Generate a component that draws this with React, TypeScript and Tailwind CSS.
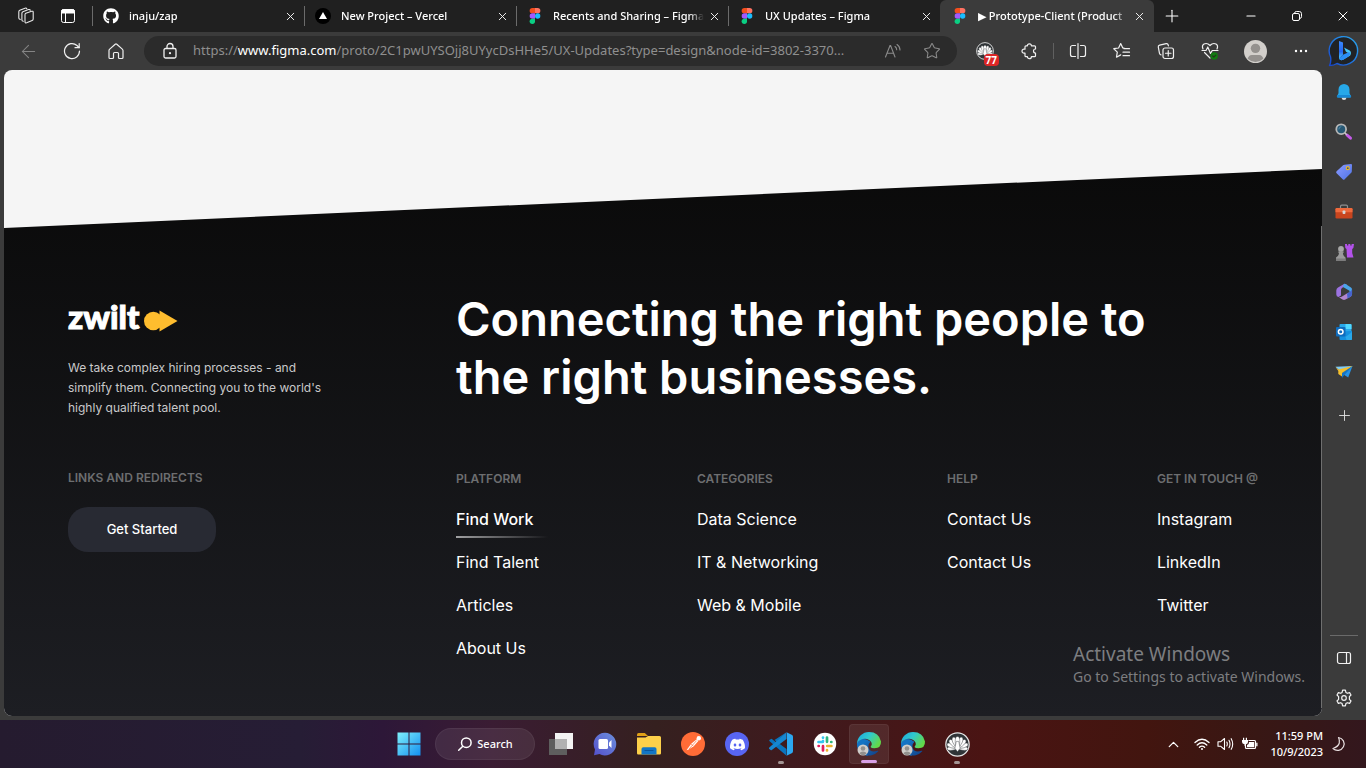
import React from "react";
import {
  ArrowLeft,
  Minus,
  Plus,
  Star,
  X,
  ChevronUp,
} from "lucide-react";
import { SiDiscord } from "react-icons/si";
import { FaGithub } from "react-icons/fa";

function FigmaLogo() {
  return (
    <svg width="12" height="16" viewBox="0 0 10 15" aria-hidden="true">
      <path d="M2.5 0H5v5H2.5a2.5 2.5 0 0 1 0-5z" fill="#f24e1e" />
      <path d="M5 0h2.5a2.5 2.5 0 0 1 0 5H5z" fill="#ff7262" />
      <path d="M2.5 5H5v5H2.5a2.5 2.5 0 0 1 0-5z" fill="#a259ff" />
      <circle cx="7.5" cy="7.5" r="2.5" fill="#1abcfe" />
      <path d="M2.5 10H5v2.5A2.5 2.5 0 1 1 2.5 10z" fill="#0acf83" />
    </svg>
  );
}

function VercelLogo() {
  return (
    <svg width="16" height="16" viewBox="0 0 16 16" aria-hidden="true">
      <circle cx="8" cy="8" r="8" fill="#000" />
      <path d="M8 4l4 7H4z" fill="#fff" />
    </svg>
  );
}

function WorkspacesIcon() {
  return (
    <svg width="18" height="18" viewBox="0 0 18 18" fill="none" stroke="#e8e8e8" strokeWidth="1.1" strokeLinejoin="round" strokeLinecap="round" aria-hidden="true">
      <path d="M8.800 6.300l5.800-2q1.600-.5 1.600 1v6.800q0 1.100-1 1.500l-5.600 2.200q-1.600.5-1.600-1V7.700q0-1 .8-1.400z" />
      <path d="M6.300 14.300q-1.400-.1-1.400-1.300V6.300q0-1.100 1-1.500l5.600-2.200q1.400-.5 1.800.6" />
      <path d="M3.200 12.400q-1.400-.1-1.400-1.300V4.700q0-1.100 1-1.500l5.200-2q1.400-.5 1.800.6" />
    </svg>
  );
}

function TabActionsIcon() {
  return (
    <svg width="16" height="16" viewBox="0 0 16 16" fill="none" aria-hidden="true">
      <rect x="1.500" y="1.500" width="13" height="13" rx="2" stroke="#fff" />
      <path d="M1.500 5V3.500a2 2 0 0 1 2-2h9a2 2 0 0 1 2 2V5z" fill="#fff" stroke="#fff" />
      <path d="M5.500 5v9" stroke="#fff" />
    </svg>
  );
}

function RefreshIcon() {
  return (
    <svg width="18" height="18" viewBox="0 0 18 18" fill="none" stroke="#f0f0f0" strokeWidth="1.200" strokeLinecap="round" aria-hidden="true">
      <path d="M16.500 9A7.500 7.500 0 1 1 14 3.500L16 5.500" />
      <path d="M16.200 1.500v4.200H12" />
    </svg>
  );
}

function HomeIcon() {
  return (
    <svg width="18" height="18" viewBox="0 0 18 18" fill="none" stroke="#f0f0f0" strokeWidth="1.200" strokeLinejoin="round" strokeLinecap="round" aria-hidden="true">
      <path d="M8.200 2.200L2.700 7.100q-.7.600-.7 1.500v6.900q0 1 1 1h2.500q1 0 1-1v-4q0-1 1-1h3q1 0 1 1v4q0 1 1 1H15q1 0 1-1V8.600q0-.9-.7-1.500L9.800 2.200q-.8-.7-1.600 0z" />
    </svg>
  );
}

function LockIcon() {
  return (
    <svg width="16" height="18" viewBox="0 0 16 18" className="shrink-0" fill="none" stroke="#f0f0f0" strokeWidth="1.300" aria-hidden="true">
      <rect x="2" y="6.500" width="12" height="9.500" rx="1.500" />
      <path d="M5 6.500V4.500a3 3 0 0 1 6 0v2" />
      <circle cx="8" cy="11.200" r="1.100" fill="#f0f0f0" stroke="none" />
    </svg>
  );
}

function ReadAloudIcon() {
  return (
    <svg width="18" height="16" viewBox="0 0 18 16" fill="none" stroke="#8b8b8b" strokeWidth="1.100" strokeLinecap="round" aria-hidden="true">
      <path d="M1.500 14L6 2.500h.6L11 14M3 10.200h6.500" />
      <path d="M11 3.500q1.700 1.200 1.700 3.300M13 1.500q3 2 3 5.500" />
    </svg>
  );
}

function PeacockIcon({ size }: { size: number }) {
  return (
    <svg width={size} height={size} viewBox="0 0 24 24" aria-hidden="true">
      <circle cx="12" cy="12" r="11.200" fill="#2f3437" stroke="#e5e5e5" strokeWidth="1.200" />
      <g fill="#fff" stroke="#2f3437" strokeWidth=".4">
        <ellipse cx="12" cy="9.500" rx="2" ry="4.500" transform="rotate(-96 12 15)" />
        <ellipse cx="12" cy="9.500" rx="2" ry="4.500" transform="rotate(96 12 15)" />
        <ellipse cx="12" cy="9" rx="2.100" ry="4.700" transform="rotate(-72 12 15)" />
        <ellipse cx="12" cy="9" rx="2.100" ry="4.700" transform="rotate(72 12 15)" />
        <ellipse cx="12" cy="9" rx="2.200" ry="4.800" transform="rotate(-47 12 15)" />
        <ellipse cx="12" cy="9" rx="2.200" ry="4.800" transform="rotate(47 12 15)" />
        <ellipse cx="12" cy="9" rx="2.200" ry="4.800" transform="rotate(-23 12 15)" />
        <ellipse cx="12" cy="9" rx="2.200" ry="4.800" transform="rotate(23 12 15)" />
        <ellipse cx="12" cy="9" rx="2.200" ry="4.800" />
        <path d="M10.800 9h2.400l1.300 6.500-2.500 3.500-2.500-3.500z" />
      </g>
    </svg>
  );
}

function PuzzleIcon() {
  return (
    <svg width="18" height="18" viewBox="0 0 18 18" fill="none" stroke="#f0f0f0" strokeWidth="1.200" strokeLinejoin="round" aria-hidden="true">
      <path d="M6 3.800h1.400a2 2 0 0 1 4 0H14.500q1 0 1 1V7a2 2 0 0 0 0 4v2.700q0 1-1 1h-3.100a2 2 0 0 1-4 0H6q-1 0-1-1V11.200h-1a2 2 0 0 1 0-4h1V4.800q0-1 1-1z" />
    </svg>
  );
}

function SplitIcon() {
  return (
    <svg width="18" height="18" viewBox="0 0 18 18" fill="none" stroke="#f0f0f0" strokeWidth="1.200" strokeLinecap="round" aria-hidden="true">
      <path d="M6.500 3.500h-3a2 2 0 0 0-2 2v7a2 2 0 0 0 2 2h3M11.500 3.500h3a2 2 0 0 1 2 2v7a2 2 0 0 1-2 2h-3M9 1.500v15" />
    </svg>
  );
}

function FavoritesIcon() {
  return (
    <svg width="18" height="18" viewBox="0 0 18 18" fill="none" stroke="#f0f0f0" strokeWidth="1.200" strokeLinecap="round" strokeLinejoin="round" aria-hidden="true">
      <path d="M11 6.200L9.800 6 7.700 1.600 5.600 6l-4.800.7 3.500 3.400-.8 5.100 4.200-2.300" />
      <path d="M11 6.700h5.500M10 10.200h6.500M10 13.700h6.500" />
    </svg>
  );
}

function CollectionsIcon() {
  return (
    <svg width="18" height="18" viewBox="0 0 18 18" fill="none" stroke="#f0f0f0" strokeWidth="1.200" strokeLinecap="round" strokeLinejoin="round" aria-hidden="true">
      <rect x="6" y="6" width="10.500" height="10.500" rx="2" />
      <path d="M11.250 8.500v5.500M8.500 11.250H14M4 12.800q-1.200-.2-1.500-1.500L1.300 5.200q-.3-1.600 1.300-2l6.600-1.500q1.600-.3 2 1.300l.2.800" />
    </svg>
  );
}

function EssentialsIcon() {
  return (
    <svg width="20" height="20" viewBox="0 0 20 20" fill="none" stroke="#f0f0f0" strokeWidth="1.200" strokeLinecap="round" strokeLinejoin="round" aria-hidden="true">
      <path d="M3 8Q1.500 4.500 4 3q3.200-1.500 6 1.500 2.800-3 6-1.500 2.500 1.500 1 5M4.500 11.500L10 17" />
      <path d="M2 9.500h4l1.800-3.500 2.700 6.500 1.700-3H18" />
      <circle cx="14.200" cy="15" r="3.700" fill="#107c10" stroke="none" />
      <path d="M12.700 15l1.100 1.100 2-2" stroke="#26351f" />
    </svg>
  );
}

function ProfileIcon({ size }: { size: number }) {
  return (
    <svg width={size} height={size} viewBox="0 0 22 22" aria-hidden="true">
      <circle cx="11" cy="11" r="11" fill="#d2cfcb" />
      <circle cx="11" cy="8" r="4.500" fill="#94918e" />
      <path d="M3.500 18q1-3.700 4-3.700h7q3 0 4 3.700a11 11 0 0 1-15 0z" fill="#94918e" />
    </svg>
  );
}

function BingIcon() {
  return (
    <svg width="32" height="32" viewBox="0 0 32 32" aria-hidden="true">
      <defs>
        <linearGradient id="bing-ring" x1="1" y1="0" x2="0" y2="1">
          <stop offset="0" stopColor="#2aa9ef" />
          <stop offset="1" stopColor="#1746cf" />
        </linearGradient>
        <linearGradient id="bing-b" x1="0" y1="0" x2="0" y2="1">
          <stop offset="0" stopColor="#3a8bff" />
          <stop offset=".6" stopColor="#2667ef" />
          <stop offset="1" stopColor="#4cc8f6" />
        </linearGradient>
      </defs>
      <path d="M1.500 30.500Q3.300 27 2.600 22A14.200 14.200 0 1 1 9 28.500Q6 30.500 1.500 30.500z" fill="#202326" stroke="url(#bing-ring)" strokeWidth="1.400" strokeLinejoin="round" />
      <path d="M11 6l4 1.500v12.200L11 23.500z" fill="url(#bing-b)" />
      <path d="M11 23.500q1.200 2.500 4.200 1.200l7-4.200q1.800-3-.5-5L16 12.500l2 4.300 2.500 1.400z" fill="#47c4f5" />
      <path d="M11 23.500l4-3.800 6.200-2.700q1.800 2.500-.8 4.500l-5.200 3.200Q12.500 26 11 23.500z" fill="#2a8df5" />
    </svg>
  );
}

function BellIcon() {
  return (
    <svg width="18" height="18" viewBox="0 0 18 18" aria-hidden="true">
      <path d="M6.500 14.500h5q-.4 2.500-2.500 2.500t-2.500-2.500z" fill="#dedede" />
      <path d="M9 1a5.500 5.500 0 0 0-5.500 5.500v3.800L2 13.200q-.3 1.300 1 1.300h12q1.300 0 1-1.300l-1.500-2.900V6.500A5.500 5.500 0 0 0 9 1z" fill="#27a8e8" />
      <path d="M2.500 12h13l.5 1.300q.2 1.200-1 1.200H3q-1.300 0-1-1.300z" fill="#1787d3" />
    </svg>
  );
}

function MagnifierIcon() {
  return (
    <svg width="18" height="18" viewBox="0 0 18 18" aria-hidden="true">
      <path d="M12 12l3.500 3.200" stroke="#c45be8" strokeWidth="3" strokeLinecap="round" />
      <path d="M9.500 9.500l2.200 2.200" stroke="#ccc" strokeWidth="1.500" />
      <circle cx="6.200" cy="6.200" r="4.900" fill="#275874" stroke="#b8b8b8" strokeWidth="1.800" />
      <path d="M3.800 6.400a3 3 0 0 1 2.500-2.800" stroke="#508aa9" fill="none" />
    </svg>
  );
}

function TagIcon() {
  return (
    <svg width="18" height="18" viewBox="0 0 18 18" aria-hidden="true">
      <defs>
        <linearGradient id="tag" x1="0" y1="0" x2="1" y2="1">
          <stop offset="0" stopColor="#8c9bff" />
          <stop offset="1" stopColor="#4e73e6" />
        </linearGradient>
      </defs>
      <path d="M9.500 1.800L16 1q1 0 1 1l-.2 6.500q0 .7-.6 1.300l-6.500 6.500q-1 1-2 0L1.600 10.300q-1-1 0-2l6.500-6q.6-.5 1.400-.5z" fill="url(#tag)" />
      <circle cx="12.800" cy="5.200" r="1.500" fill="#41507b" stroke="#e7b829" strokeWidth="1.200" />
    </svg>
  );
}

function ToolboxIcon() {
  return (
    <svg width="18" height="18" viewBox="0 0 18 18" aria-hidden="true">
      <path d="M5.500 5V3.500q0-1.300 1.300-1.300h4.400q1.300 0 1.300 1.300V5" fill="none" stroke="#8f8f8f" strokeWidth="1.200" />
      <rect x=".5" y="5" width="17" height="10.500" rx="1.200" fill="#c9451e" />
      <path d="M.5 9.300V6.200Q.5 5 1.700 5h14.600q1.200 0 1.200 1.200v3.100z" fill="#ef6a3d" />
      <rect x="7.600" y="7.500" width="2.800" height="3.500" rx=".8" fill="#d6d6d6" />
    </svg>
  );
}

function ChessIcon() {
  return (
    <svg width="19" height="19" viewBox="0 0 19 19" aria-hidden="true">
      <path d="M10 1h2v1.500h1.300V1h2v1.500h1.300V1H19l-.6 4-1.200 1v4l1.300 4.500h-6.500l-.5-8.500-1.200-1z" fill="#b352ea" />
      <circle cx="6" cy="6" r="2.900" fill="#a8a8a8" />
      <path d="M3.300 8.500h5.400v1.300H7.900q0 3 2.600 4.700V18H1v-3.500q3-1.700 3-4.700h-.7z" fill="#9a9a9a" />
      <path d="M1 15.500h9.500V18H1z" fill="#7c7c7c" />
    </svg>
  );
}

function M365Icon() {
  return (
    <svg width="18" height="18" viewBox="0 0 18 18" aria-hidden="true">
      <path d="M9.500.8L3 4.500Q1.300 5.500 1.300 7.500v4q0 2 2.200 2.500L6 12.500V7q0-1.500 1.300-2.200l5-2.800z" fill="#9b72e0" />
      <path d="M9.500.8Q8 1.800 8 4l6.500 3.800q.3 1.400-.5 2.700l2.500 2.300q.6-1 .6-2V6.800q0-1.700-1.500-2.500L11 1.200Q10.200.7 9.500.8z" fill="#49a5e9" />
      <path d="M3 13.700q2 1.200 4-.2l6.500-4 .5 1 2.500 2.300q-.3.500-1 1l-5 2.800q-1.500.8-3 0z" fill="#b285cf" />
      <path d="M12 10.500l3-1.700q2-1.300 2-3.300v5.700q0 1.600-1.500 2.500l-3 1.700z" fill="#4763ce" />
    </svg>
  );
}

function OutlookIcon() {
  return (
    <svg width="18" height="18" viewBox="0 0 18 18" aria-hidden="true">
      <rect x="4.500" y="1" width="12" height="9" rx="1" fill="#28a8ea" />
      <path d="M10.500 1h5q1 0 1 1v4h-6z" fill="#50d9ff" />
      <path d="M4.500 8.500L17 8v8q0 1-1 1H5.500q-1 0-1-1z" fill="#1490df" />
      <path d="M17 9v7q0 1-1 1h-4.500l-1-3z" fill="#28a8ea" />
      <rect x="1" y="4" width="9.500" height="9.500" rx="1" fill="#0f6cbd" />
      <circle cx="5.700" cy="8.700" r="2.300" fill="none" stroke="#fff" strokeWidth="1.500" />
    </svg>
  );
}

function PlaneIcon() {
  return (
    <svg width="18" height="18" viewBox="0 0 18 18" aria-hidden="true">
      <path d="M17.500 3L13.200 14.500 7 10.500z" fill="#2593e6" />
      <path d="M.5 3.800L17.500 3 8 7.200 3.800 7z" fill="#7ecbf7" />
      <path d="M17.500 3L7 9.800v5.200l2.600-3.200z" fill="#1674c4" />
      <path d="M.5 3.800l3 2.700L17.500 3 7 10v3.500L3.300 11V8z" fill="#f4bf2c" />
    </svg>
  );
}

function SidePanelIcon() {
  return (
    <svg width="16" height="16" viewBox="0 0 16 16" fill="none" stroke="#f2f2f2" strokeWidth="1.200" aria-hidden="true">
      <rect x="1.500" y="2.500" width="13" height="11" rx="2" />
      <path d="M10.500 2.500v11" />
    </svg>
  );
}

function GearIcon() {
  return (
    <svg width="18" height="18" viewBox="0 0 18 18" fill="none" stroke="#f2f2f2" strokeWidth="1.200" strokeLinejoin="round" aria-hidden="true">
      <circle cx="9" cy="9" r="2.300" />
      <path d="M7.600 1.200h2.800l.5 2.200 1.500.9 2.200-.7L16 6l-1.600 1.700v2.600L16 12l-1.400 2.400-2.200-.7-1.500.9-.5 2.200H7.600l-.5-2.200-1.500-.9-2.200.7L2 12l1.600-1.700V7.700L2 6l1.400-2.400 2.200.7 1.500-.9z" />
    </svg>
  );
}

function ZwiltMark() {
  return (
    <svg width="34" height="22" viewBox="0 0 34 22" aria-hidden="true">
      <circle cx="9.300" cy="11" r="9.300" fill="#ffbd2e" />
      <path d="M15.500.500L33.500 11l-18 10.500z" fill="#ffbd2e" />
    </svg>
  );
}

function StartIcon() {
  return (
    <svg width="24" height="24" viewBox="0 0 24 24" aria-hidden="true">
      <defs>
        <linearGradient id="win" x1="0" y1="0" x2="1" y2="1">
          <stop offset="0" stopColor="#7ff0fb" />
          <stop offset="1" stopColor="#138ff0" />
        </linearGradient>
      </defs>
      <path d="M.500.500h11v11H.500zM12.500.500h11v11h-11zM.500 12.500h11v11H.500zM12.500 12.500h11v11h-11z" fill="url(#win)" />
    </svg>
  );
}

function SearchIcon() {
  return (
    <svg width="16" height="16" viewBox="0 0 16 16" fill="none" stroke="#fff" strokeWidth="1.500" strokeLinecap="round" aria-hidden="true">
      <circle cx="9.300" cy="6.700" r="4.800" />
      <path d="M5.800 10.200L1.700 14.300" />
    </svg>
  );
}

function TaskViewIcon() {
  return (
    <svg width="24" height="24" viewBox="0 0 24 24" aria-hidden="true">
      <rect x="6" y="1" width="18" height="16" fill="#f3f3f3" />
      <rect x="0" y="7" width="18" height="16" fill="#5e5e5e" />
      <rect x="6" y="7" width="12" height="10" fill="#b1b1b1" />
    </svg>
  );
}

function ChatIcon() {
  return (
    <svg width="24" height="24" viewBox="0 0 24 24" aria-hidden="true">
      <defs>
        <linearGradient id="chat" x1="1" y1="0" x2="0" y2="1">
          <stop offset="0" stopColor="#6b8fdc" />
          <stop offset="1" stopColor="#5450cb" />
        </linearGradient>
      </defs>
      <path d="M12 .8A11.300 11.300 0 1 1 6.500 22L1 23.300l1-5.800A11.300 11.300 0 0 1 12 .8z" fill="url(#chat)" />
      <rect x="5.500" y="7" width="9.500" height="10" rx="1.500" fill="#fff" />
      <path d="M16 10.500l2.500-2.500v8L16 13.500z" fill="#fff" />
    </svg>
  );
}

function ExplorerIcon() {
  return (
    <svg width="24" height="24" viewBox="0 0 24 24" aria-hidden="true">
      <path d="M0 2.500Q0 1 1.500 1h6.300L11 4H0z" fill="#e0a018" />
      <path d="M0 5.500h8.500L11 4h11.500Q24 4 24 5.500v15.800q0 1.200-1.200 1.200H1.200Q0 22.500 0 21.300z" fill="#fdd04a" />
      <path d="M4.500 22.500V17q0-1.800 1.800-1.800h11.400q1.800 0 1.800 1.800v5.500z" fill="#1276c6" />
      <path d="M7.500 18.500h9" stroke="#0a559b" />
    </svg>
  );
}

function VsCodeIcon() {
  return (
    <svg width="24" height="24" viewBox="0 0 24 24" aria-hidden="true">
      <path d="M17.500.300L7 10.200 2.600 6.800.6 7.800q-.8.8 0 1.500L17.500 23.700V17L5.500 8z" fill="#0a74be" />
      <path d="M17.500.300L0 15.800q-.4.700.3 1.200l1.300 1.100q.6.400 1.200 0L17.500 7z" fill="#1686d0" />
      <path d="M17.500.300L22.700 2.700q1.300.6 1.300 2v14.600q0 1.400-1.300 2l-5.200 2.400q.7-.7.500-2V2.300q.2-1.300-.5-2z" fill="#2ba8f1" />
    </svg>
  );
}

function EdgeIcon() {
  return (
    <svg width="26" height="26" viewBox="0 0 26 26" aria-hidden="true">
      <defs>
        <linearGradient id="edge-top" x1="0" y1="0" x2="1" y2=".5">
          <stop offset="0" stopColor="#1ba5dd" />
          <stop offset=".5" stopColor="#30c9ce" />
          <stop offset="1" stopColor="#62d94a" />
        </linearGradient>
        <linearGradient id="edge-low" x1="0" y1="0" x2="1" y2="1">
          <stop offset="0" stopColor="#1785d8" />
          <stop offset="1" stopColor="#113f86" />
        </linearGradient>
      </defs>
      <path d="M1 12A12 12 0 0 0 22 20.500q.8-1-.4-.7-7.500 2.700-9.100-3.500-.5-3.200 2-5.500Q8 5 1 12z" fill="url(#edge-low)" />
      <path d="M7.500 14.500q-.5 5.500 4.500 10Q2 25 1 14q0-4 5-6l6 1q-4 1.500-4.500 5.500z" fill="#1474c4" />
      <path d="M1 12.500A12 12 0 0 1 13 1q10 0 12 9.500.3 6.700-6.500 6.800-3.200 0-4-1.300.8-1 1.300-2.400Q16 9.500 11 8 4.500 7 1 12.500z" fill="url(#edge-top)" />
      <circle cx="7" cy="19" r="5.500" fill="#d0cecb" />
      <circle cx="7" cy="17.500" r="2.300" fill="#92908d" />
      <path d="M3.300 22.500q1-2 3.700-2t3.700 2Q7 26 3.300 22.500z" fill="#92908d" />
    </svg>
  );
}

function SlackBadge() {
  return (
    <svg width="24" height="24" viewBox="0 0 24 24" aria-hidden="true">
      <circle cx="12" cy="12" r="11.200" fill="#fff" />
      <g strokeWidth="2.700" strokeLinecap="round">
        <path d="M10 9.300V9M5.500 10h4.300" stroke="#36c5f0" />
        <path d="M10 5.600v.2" stroke="#36c5f0" />
        <path d="M14 5.600V9.800M18.400 10h-.2" stroke="#2eb67d" />
        <path d="M14.200 14h4.200M14 18.400v-.2" stroke="#ecb22e" />
        <path d="M10 14.200v4.200M5.600 14h.2" stroke="#e01e5a" />
      </g>
    </svg>
  );
}

function PostmanBadge() {
  return (
    <svg width="24" height="24" viewBox="0 0 24 24" aria-hidden="true">
      <circle cx="12" cy="12" r="12" fill="#ff6c37" />
      <path d="M5.500 18.300l4.700-6.500 5.500-4.600 1.600 1.700-4.600 5.300-5.500 3.600z" fill="#fff" />
      <circle cx="17.800" cy="6.300" r="2.200" fill="#fff" />
      <path d="M8 17l7.500-8.300M10 11.800l2.500 2.500" stroke="#ff6c37" strokeWidth=".7" />
    </svg>
  );
}

function DiscordBadge() {
  return (
    <span className="flex size-6 items-center justify-center rounded-full bg-[#5865f2]">
      <SiDiscord className="size-[15px] text-white" />
    </span>
  );
}

function WifiIcon() {
  return (
    <svg width="16" height="14" viewBox="0 0 16 14" fill="none" stroke="#fff" strokeWidth="1.300" strokeLinecap="round" aria-hidden="true">
      <path d="M1 5.500q7-6.500 14 0M3.200 8q4.800-4.500 9.600 0M5.400 10.300q2.600-2.400 5.200 0" />
      <circle cx="8" cy="12" r="1" fill="#fff" stroke="none" />
    </svg>
  );
}

function VolumeIcon() {
  return (
    <svg width="17" height="16" viewBox="0 0 17 16" fill="none" stroke="#fff" strokeWidth="1.100" strokeLinejoin="round" strokeLinecap="round" aria-hidden="true">
      <path d="M1 5.800h2.500L7.500 2.500v11L3.500 10.200H1z" />
      <path d="M9.800 6q1 2 0 4M12 4.300q2 3.700 0 7.400M14.200 2.700q3 5.300 0 10.600" />
    </svg>
  );
}

function BatteryIcon() {
  return (
    <svg width="17" height="14" viewBox="0 0 17 14" aria-hidden="true">
      <path d="M7.500 3.500h6q1 0 1 1v6q0 1-1 1h-8q-1 0-1-1V9" fill="none" stroke="#fff" strokeWidth="1.200" />
      <path d="M8 5h5.200v5.200H6V8q2.200-.5 2-3zM15.200 5.800h1.300v3.400h-1.300z" fill="#fff" />
      <path d="M1 3h6v2q0 2-2 2.300V9H3.500V7.300Q1 7 1 5zM2 .8h1.200V3H2zM4.800.8H6V3H4.800z" fill="#fff" />
    </svg>
  );
}

function MoonIcon() {
  return (
    <svg width="14" height="16" viewBox="0 0 14 16" fill="none" stroke="#e7dedf" strokeWidth="1.200" strokeLinejoin="round" aria-hidden="true">
      <path d="M6.500 1.500a6.500 6.500 0 1 1-5.500 11q5.500-2 6.300-5.500.5-3-.8-5.500z" />
    </svg>
  );
}

type Tab = { title: string; icon: React.ReactNode; active?: boolean };

const tabs: Tab[] = [
  { title: "inaju/zap", icon: <FaGithub className="size-4 text-white" /> },
  { title: "New Project – Vercel", icon: <VercelLogo /> },
  { title: "Recents and Sharing – Figma", icon: <FigmaLogo /> },
  { title: "UX Updates – Figma", icon: <FigmaLogo /> },
  { title: "▶ Prototype-Client (Product", icon: <FigmaLogo />, active: true },
];

function TabStrip() {
  return (
    <header className="flex h-8 items-stretch bg-[#202020]">
      <div className="flex w-[92px] shrink-0 items-center gap-[25px] pl-[17px]">
        <button aria-label="Workspaces"><WorkspacesIcon /></button>
        <button aria-label="Tab actions menu"><TabActionsIcon /></button>
      </div>
      {tabs.map((tab) => (
        <div
          key={tab.title}
          className={
            tab.active
              ? "flex w-[214px] items-center rounded-t-md bg-[#3b3b3b] pr-[9px] pl-3"
              : "flex w-[212px] items-center bg-[linear-gradient(#6b6b6b,#6b6b6b)] bg-[length:1px_20px] bg-left bg-no-repeat pr-2 pl-[11px]"
          }
        >
          <span className="flex w-4 shrink-0 justify-center">{tab.icon}</span>
          <span className="ml-[10px] min-w-0 flex-1 overflow-hidden mask-r-from-90% font-['Noto_Sans',sans-serif] text-[11px] font-medium whitespace-nowrap text-white">
            {tab.title}
          </span>
          <button aria-label={`Close ${tab.title}`} className="ml-1 flex w-3 shrink-0 justify-center">
            <X size={13} strokeWidth={1.800} color="#f0f0f0" className="shrink-0" />
          </button>
        </div>
      ))}
      <button aria-label="New tab" className="flex w-9 items-center justify-center">
        <Plus size={20} strokeWidth={1.300} color="#fff" />
      </button>
      <div className="ml-auto flex">
        <button aria-label="Minimize" className="flex w-[46px] items-center justify-center">
          <Minus size={14} strokeWidth={1.800} color="#fff" />
        </button>
        <button aria-label="Restore" className="flex w-[46px] items-center justify-center">
          <svg width="12" height="12" viewBox="0 0 12 12" fill="none" stroke="#fff" aria-hidden="true">
            <rect x="1.500" y="3.500" width="7" height="7" rx="1.500" />
            <path d="M3.500 3.300q.2-1.800 1.800-1.800h3q2.200 0 2.200 2.200v3q0 1.600-1.800 1.800" />
          </svg>
        </button>
        <button aria-label="Close window" className="flex w-[46px] items-center justify-center">
          <X size={16} strokeWidth={1.500} color="#fff" />
        </button>
      </div>
    </header>
  );
}

function ToolButton({ label, children }: { label: string; children: React.ReactNode }) {
  return (
    <button aria-label={label} className="flex w-11 shrink-0 items-center justify-center">
      {children}
    </button>
  );
}

function Toolbar() {
  return (
    <nav className="flex h-[38px] items-stretch bg-[#3b3b3b] pl-[6px]">
      <ToolButton label="Back"><ArrowLeft size={21} strokeWidth={1.200} color="#858585" /></ToolButton>
      <ToolButton label="Refresh"><RefreshIcon /></ToolButton>
      <ToolButton label="Home"><HomeIcon /></ToolButton>
      <div className="my-1 mr-[6px] ml-[6px] flex min-w-0 flex-1 items-center rounded-full bg-[#2b2b2b] pr-4 pl-[18px]">
        <LockIcon />
        <a
          href="#address"
          className="ml-[15px] min-w-0 flex-1 truncate font-['Noto_Sans',sans-serif] text-[13px] text-[#8f8f8f]"
        >
          https://<span className="text-white">www.figma.com</span>/proto/2C1pwUYSOjj8UYycDsHHe5/UX-Updates?type=design&amp;node-id=3802-3370...
        </a>
        <button aria-label="Read aloud" className="ml-4 shrink-0"><ReadAloudIcon /></button>
        <button aria-label="Add to favorites" className="ml-[21px] shrink-0">
          <Star size={18} strokeWidth={1.400} color="#8b8b8b" />
        </button>
      </div>
      <button aria-label="Extension" className="relative flex w-11 items-center justify-center">
        <PeacockIcon size={18} />
        <span className="absolute right-2 bottom-1 rounded-sm bg-[#dc2626] px-[2px] font-['Open_Sans',sans-serif] text-[10px] leading-[12px] font-bold text-white">
          77
        </span>
      </button>
      <ToolButton label="Extensions"><PuzzleIcon /></ToolButton>
      <div className="mx-[2px] w-px self-center bg-[#606060] h-4" />
      <ToolButton label="Split screen"><SplitIcon /></ToolButton>
      <ToolButton label="Favorites"><FavoritesIcon /></ToolButton>
      <ToolButton label="Collections"><CollectionsIcon /></ToolButton>
      <ToolButton label="Browser essentials"><EssentialsIcon /></ToolButton>
      <button aria-label="Profile" className="flex w-[46px] items-center justify-center"><ProfileIcon size={23} /></button>
      <button aria-label="Settings and more" className="flex w-[46px] items-center justify-center">
        <svg width="14" height="4" viewBox="0 0 14 4" fill="#fff" aria-hidden="true">
          <circle cx="2" cy="2" r="1.200" /><circle cx="7" cy="2" r="1.200" /><circle cx="12" cy="2" r="1.200" />
        </svg>
      </button>
      <button aria-label="Bing chat" className="flex w-[42px] items-center justify-end pr-[6px]"><BingIcon /></button>
    </nav>
  );
}

const sideApps = [
  { label: "Notifications", icon: <BellIcon /> },
  { label: "Search", icon: <MagnifierIcon /> },
  { label: "Shopping", icon: <TagIcon /> },
  { label: "Tools", icon: <ToolboxIcon /> },
  { label: "Games", icon: <ChessIcon /> },
  { label: "Microsoft 365", icon: <M365Icon /> },
  { label: "Outlook", icon: <OutlookIcon /> },
  { label: "Drop", icon: <PlaneIcon /> },
];

function Sidebar() {
  return (
    <aside className="flex w-11 shrink-0 flex-col items-stretch pt-[2px]">
      {sideApps.map((app) => (
        <button key={app.label} aria-label={app.label} className="flex h-10 items-center justify-center">
          {app.icon}
        </button>
      ))}
      <button aria-label="Customize" className="mt-[3px] flex h-10 items-center justify-center">
        <Plus size={17} strokeWidth={1.300} color="#e0e0e0" />
      </button>
      <div className="mx-2 mt-auto mb-[2px] h-px bg-[#6a6a6a]" />
      <button aria-label="Toggle sidebar" className="flex h-10 items-center justify-center"><SidePanelIcon /></button>
      <button aria-label="Settings" className="mb-[2px] flex h-10 items-center justify-center"><GearIcon /></button>
    </aside>
  );
}

const linkColumns = [
  { title: "PLATFORM", links: ["Find Work", "Find Talent", "Articles", "About Us"] },
  { title: "CATEGORIES", links: ["Data Science", "IT & Networking", "Web & Mobile"] },
  { title: "HELP", links: ["Contact Us", "Contact Us"] },
  { title: "GET IN TOUCH @", links: ["Instagram", "LinkedIn", "Twitter"] },
];

function SiteFooter() {
  return (
    <footer className="flex-1 bg-linear-to-b from-[#0a0a0a] to-[#1d1e23] px-16 pt-[121px] font-[Inter,sans-serif] [clip-path:polygon(0_59px,100%_0,100%_100%,0_100%)]">
      <div className="grid grid-cols-[388fr_241fr_250fr_210fr_101fr]">
        <div className="pt-2">
          <div className="flex h-9 items-end gap-[5px]">
            <span className="font-[Lato,sans-serif] text-[33px] leading-9 font-black text-white [-webkit-text-stroke:1px_white]">zwilt</span>
            <span className="mb-[2px]"><ZwiltMark /></span>
          </div>
          <p className="mt-6 w-[270px] text-[12px] leading-5 text-[#c9c9ca]">
            We take complex hiring processes - and simplify them. Connecting you to the world's highly qualified talent pool.
          </p>
        </div>
        <h1 className="col-span-4 max-w-[720px] text-[47px] leading-[58px] font-semibold text-white">
          Connecting the right people to the right businesses.
        </h1>
        <div className="mt-[50px]">
          <h2 className="text-[12px] leading-5 font-semibold text-[#6d6e70]">LINKS AND REDIRECTS</h2>
          <button className="mt-[19px] h-[45px] w-[148px] rounded-[20px] bg-[#282a33] text-[13px] font-medium text-white">
            Get Started
          </button>
        </div>
        {linkColumns.map((column) => (
          <div key={column.title} className="mt-[51px]">
            <h2 className="text-[12px] leading-5 font-semibold whitespace-nowrap text-[#6d6e70]">{column.title}</h2>
            <ul className="mt-[18px] flex flex-col gap-[19px]">
              {column.links.map((link, i) => (
                <li key={i} className="relative">
                  <a
                    href="#link"
                    className={
                      link === "Find Work"
                        ? "block text-[16px] leading-6 font-medium whitespace-nowrap text-white"
                        : "block text-[16px] leading-6 whitespace-nowrap text-white"
                    }
                  >
                    {link}
                  </a>
                  {link === "Find Work" && (
                    <span className="absolute top-[29px] left-0 h-[2px] w-[92px] bg-linear-to-r from-[#a0a0a2] to-transparent" />
                  )}
                </li>
              ))}
            </ul>
          </div>
        ))}
      </div>
    </footer>
  );
}

const taskApps = [
  { label: "Task view", icon: <TaskViewIcon /> },
  { label: "Chat", icon: <ChatIcon /> },
  { label: "File Explorer", icon: <ExplorerIcon /> },
  { label: "Postman", icon: <PostmanBadge /> },
  { label: "Discord", icon: <DiscordBadge /> },
  { label: "Visual Studio Code", icon: <VsCodeIcon />, running: true },
  { label: "Slack", icon: <SlackBadge /> },
  { label: "Edge", icon: <EdgeIcon />, active: true },
  { label: "Edge profile", icon: <EdgeIcon /> },
  { label: "Peacock", icon: <PeacockIcon size={25} />, running: true },
];

function Taskbar() {
  return (
    <div className="grid h-12 grid-cols-[1fr_auto_1fr] items-stretch bg-[linear-gradient(90deg,#251b2f_0%,#261d35_22%,#2d1738_28%,#3a1c33_36%,#35201f_48%,#3f1a1e_58%,#4a1413_72%,#42150f_84%,#381714_92%,#33171d_100%)] font-['Noto_Sans',sans-serif] text-white">
      <div />
      <div className="flex items-center">
        <button aria-label="Start" className="flex w-11 justify-center"><StartIcon /></button>
        <button className="mx-1 flex h-8 w-[100px] items-center justify-center gap-1 rounded-full border border-white/5 bg-white/8 text-[11px] font-medium">
          <SearchIcon />
          Search
        </button>
        {taskApps.map((app) => (
          <button
            key={app.label}
            aria-label={app.label}
            className={
              app.active
                ? "relative mx-[2px] flex h-10 w-10 items-center justify-center rounded-sm border border-white/5 bg-white/8"
                : "relative mx-[2px] flex h-10 w-10 items-center justify-center"
            }
          >
            {app.icon}
            {app.active && <span className="absolute bottom-0 h-[3px] w-4 rounded-full bg-[#d9a0e6]" />}
            {app.running && <span className="absolute bottom-0 h-[3px] w-[6px] rounded-full bg-[#a39594]" />}
          </button>
        ))}
      </div>
      <div className="flex items-center justify-end pr-5">
        <button aria-label="Hidden icons" className="mr-3"><ChevronUp size={17} strokeWidth={1.800} /></button>
        <button aria-label="Network and sound" className="mr-3 flex items-center gap-[7px]">
          <WifiIcon />
          <VolumeIcon />
          <BatteryIcon />
        </button>
        <div className="mr-[9px] text-right text-[11px] leading-4 font-medium">
          <div>11:59 PM</div>
          <div>10/9/2023</div>
        </div>
        <MoonIcon />
      </div>
    </div>
  );
}

export default function App() {
  return (
    <div className="flex min-h-screen flex-col bg-[#3b3b3b]">
      <TabStrip />
      <Toolbar />
      <div className="flex flex-1">
        <main className="relative mb-1 ml-1 flex flex-1 flex-col overflow-hidden rounded-lg bg-[#f5f5f5] pt-[99px]">
          <SiteFooter />
          <span className="absolute top-[156px] right-0 bottom-2 w-px bg-[#6f6f6f]" />
          <div className="absolute right-[13px] bottom-[28px] w-[236px] font-['Noto_Sans',sans-serif] whitespace-nowrap text-[#7d7e80]">
            <div className="text-[19px] leading-6">Activate Windows</div>
            <div className="text-[14px] leading-[22px]">Go to Settings to activate Windows.</div>
          </div>
        </main>
        <Sidebar />
      </div>
      <Taskbar />
    </div>
  );
}
